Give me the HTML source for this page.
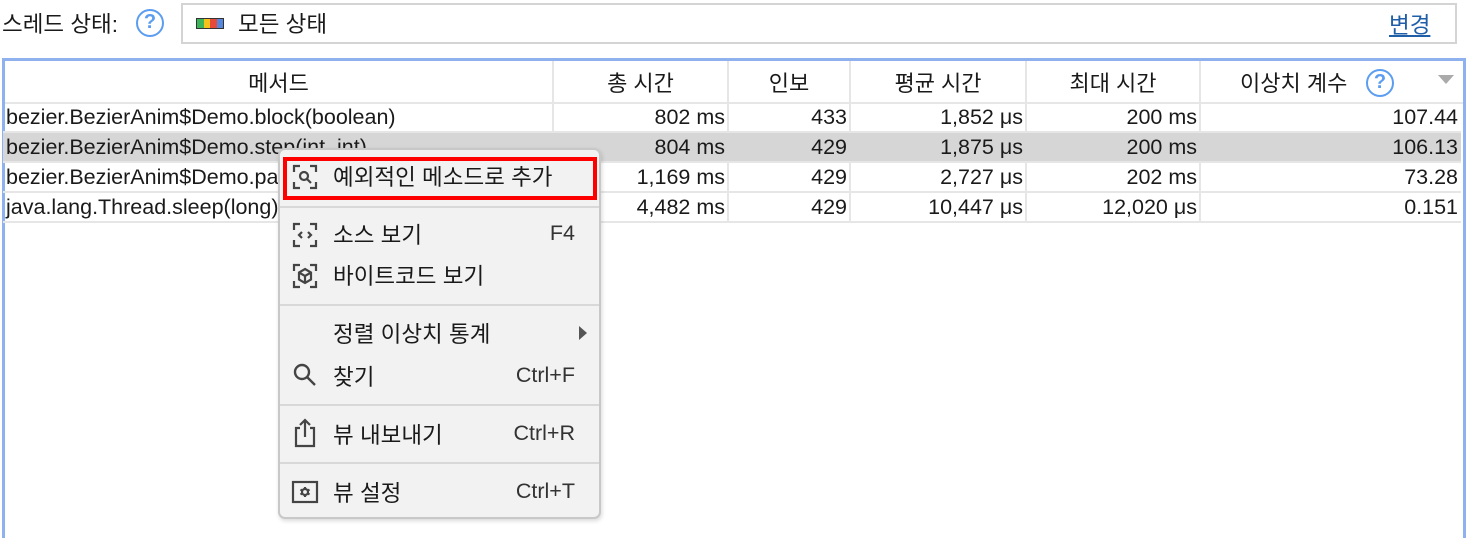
<!DOCTYPE html>
<html><head><meta charset="utf-8"><style>
*{margin:0;padding:0;box-sizing:border-box}
body{width:1468px;height:525px;background:#fff;position:relative;overflow:hidden;font-family:"Liberation Sans","Noto Sans CJK KR",sans-serif;color:#1a1a1a;font-size:21.5px}
.a{position:absolute;white-space:nowrap}
.help{position:absolute;width:28px;height:28px;border:2.5px solid #5b9df0;border-radius:50%;color:#5b9df0;font-size:20px;font-weight:bold;text-align:center;line-height:23px}
.tbl{position:absolute;left:2px;top:58px;width:1464px;height:480px;border:3px solid #8fb2ee;border-bottom:none}
.row{position:absolute;left:3px;width:1458px;height:30px;border-bottom:2px solid #e6e6e6}
.c{position:absolute;top:0;height:100%;line-height:29px;text-align:right;padding-right:3px}
.vl{position:absolute;width:2px;background:#e6e6e6}
.menu{position:absolute;left:278px;top:148px;width:323px;height:371px;background:#f2f2f2;border:2px solid #c8c8c8;border-radius:7px;box-shadow:1px 2px 4px rgba(0,0,0,.15)}
.mi{position:absolute;left:53px;font-size:22.5px}
.sc{position:absolute;right:24px;font-size:21.5px;color:#333}
.sep{position:absolute;left:0;width:319px;height:2px;background:#d8d8d8}
.h{font-size:22px}
</style></head><body>
<div class="a" style="left:2px;top:7px;font-size:22.5px">스레드 상태:</div>
<div class="help" style="left:136px;top:9px">?</div>
<div class="a" style="left:181px;top:3px;width:1276px;height:41px;border:2px solid #d4d4d4"></div>
<div class="a" style="left:196px;top:18px;width:28px;height:11px;border:1.5px solid #333;display:flex"><span style="flex:1;background:#3cb55a"></span><span style="flex:1;background:#f5c21b"></span><span style="flex:1;background:#e84a3a"></span><span style="flex:1;background:#5588dd"></span></div>
<div class="a" style="left:238px;top:7px;font-size:22.5px">모든 상태</div>
<div class="a" style="left:1389px;top:8px;font-size:22.5px;color:#1f5fa8;text-decoration:underline">변경</div>

<div class="tbl"></div>
<div class="vl" style="left:552px;top:61px;height:161px"></div>
<div class="vl" style="left:727px;top:61px;height:161px"></div>
<div class="vl" style="left:849px;top:61px;height:161px"></div>
<div class="vl" style="left:1025px;top:61px;height:161px"></div>
<div class="vl" style="left:1199px;top:61px;height:161px"></div>
<div class="a" style="left:5px;top:102px;width:1458px;height:2px;background:#e6e6e6"></div>
<div class="a h" style="left:5px;top:66px;width:547px;text-align:center">메서드</div>
<div class="a h" style="left:554px;top:66px;width:173px;text-align:center">총 시간</div>
<div class="a h" style="left:729px;top:66px;width:120px;text-align:center">인보</div>
<div class="a h" style="left:851px;top:66px;width:174px;text-align:center">평균 시간</div>
<div class="a h" style="left:1027px;top:66px;width:172px;text-align:center">최대 시간</div>
<div class="a h" style="left:1240px;top:66px">이상치 계수</div>
<div class="help" style="left:1366px;top:69px">?</div>
<div class="a" style="left:1438px;top:75px;width:0;height:0;border-left:8px solid transparent;border-right:8px solid transparent;border-top:9px solid #aaa"></div>

<div class="row" style="top:103px"><span class="c" style="left:3px;text-align:left">bezier.BezierAnim$Demo.block(boolean)</span><span class="c" style="left:550px;width:175px">802 ms</span><span class="c" style="left:725px;width:122px">433</span><span class="c" style="left:847px;width:176px">1,852 μs</span><span class="c" style="left:1023px;width:174px">200 ms</span><span class="c" style="left:1197px;width:261px">107.44</span></div>
<div class="row" style="top:133px;background:#d6d6d6"><span class="c" style="left:3px;text-align:left">bezier.BezierAnim$Demo.step(int, int)</span><span class="c" style="left:550px;width:175px">804 ms</span><span class="c" style="left:725px;width:122px">429</span><span class="c" style="left:847px;width:176px">1,875 μs</span><span class="c" style="left:1023px;width:174px">200 ms</span><span class="c" style="left:1197px;width:261px">106.13</span></div>
<div class="row" style="top:163px"><span class="c" style="left:3px;text-align:left">bezier.BezierAnim$Demo.paint</span><span class="c" style="left:550px;width:175px">1,169 ms</span><span class="c" style="left:725px;width:122px">429</span><span class="c" style="left:847px;width:176px">2,727 μs</span><span class="c" style="left:1023px;width:174px">202 ms</span><span class="c" style="left:1197px;width:261px">73.28</span></div>
<div class="row" style="top:193px"><span class="c" style="left:3px;text-align:left">java.lang.Thread.sleep(long)</span><span class="c" style="left:550px;width:175px">4,482 ms</span><span class="c" style="left:725px;width:122px">429</span><span class="c" style="left:847px;width:176px">10,447 μs</span><span class="c" style="left:1023px;width:174px">12,020 μs</span><span class="c" style="left:1197px;width:261px">0.151</span></div>

<div class="menu">
<div class="a" style="left:3px;top:7px;width:314px;height:43px;border:4px solid #f00"></div>
<svg class="a" style="left:12px;top:14px" width="26" height="26" viewBox="0 0 26 26" fill="none" stroke="#444" stroke-width="2.2"><path d="M2 8V2h6M18 2h6v6M24 18v6h-6M8 24H2v-6"/><circle cx="12" cy="12" r="4"/><path d="M15 15l4 4"/></svg>
<div class="mi" style="top:10px">예외적인 메소드로 추가</div>
<div class="sep" style="top:56px"></div>
<svg class="a" style="left:12px;top:72px" width="26" height="26" viewBox="0 0 26 26" fill="none" stroke="#444" stroke-width="2.2"><path d="M2 8V2h6M18 2h6v6M24 18v6h-6M8 24H2v-6M10 10l-3 3 3 3M16 10l3 3-3 3"/></svg>
<div class="mi" style="top:68px">소스 보기</div><div class="sc" style="top:71px">F4</div>
<svg class="a" style="left:12px;top:113px" width="26" height="26" viewBox="0 0 26 26" fill="none" stroke="#444" stroke-width="2.2"><path d="M2 8V2h6M18 2h6v6M24 18v6h-6M8 24H2v-6M13 6l6 3.5v7L13 20l-6-3.5v-7zM7 9.5l6 3.5 6-3.5M13 13v7"/></svg>
<div class="mi" style="top:109px">바이트코드 보기</div>
<div class="sep" style="top:154px"></div>
<div class="mi" style="top:167px">정렬 이상치 통계</div>
<div class="a" style="left:299px;top:176px;width:0;height:0;border-top:7px solid transparent;border-bottom:7px solid transparent;border-left:8px solid #555"></div>
<svg class="a" style="left:12px;top:212px" width="26" height="26" viewBox="0 0 26 26" fill="none" stroke="#444" stroke-width="2.4"><circle cx="10" cy="10" r="7"/><path d="M15 15l8 8"/></svg>
<div class="mi" style="top:210px">찾기</div><div class="sc" style="top:213px">Ctrl+F</div>
<div class="sep" style="top:254px"></div>
<svg class="a" style="left:12px;top:268px" width="26" height="30" viewBox="0 0 26 30" fill="none" stroke="#444" stroke-width="2.2"><path d="M8 10H4v18h18V10h-4M13 19V2M8 7l5-5 5 5"/></svg>
<div class="mi" style="top:268px">뷰 내보내기</div><div class="sc" style="top:271px">Ctrl+R</div>
<div class="sep" style="top:312px"></div>
<svg class="a" style="left:11px;top:330px" width="28" height="24" viewBox="0 0 28 24" fill="none" stroke="#444" stroke-width="2.2"><rect x="2" y="2" width="24" height="20"/><circle cx="14" cy="12" r="3"/><path d="M14 7v2M14 15v2M9.5 9.5l1.5 1M17 13.5l1.5 1M9.5 14.5l1.5-1M17 10.5l1.5-1"/></svg>
<div class="mi" style="top:326px">뷰 설정</div><div class="sc" style="top:329px">Ctrl+T</div>
</div>
</body></html>
